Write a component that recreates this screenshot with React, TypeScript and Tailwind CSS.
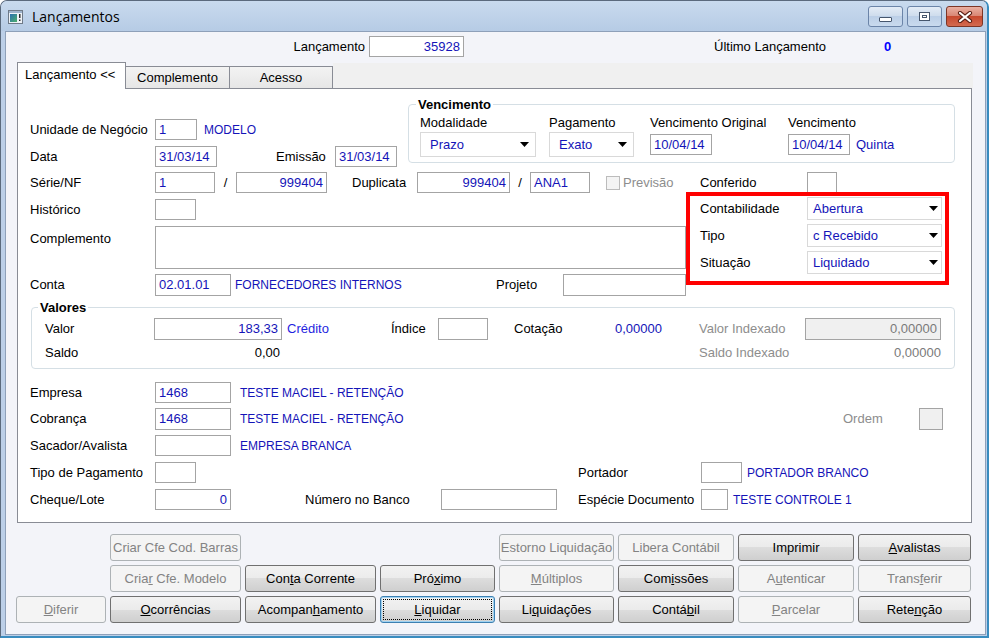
import React from 'react';

type P = { className?: string; children?: React.ReactNode };

// caixa de texto (estilo Win7)
const Box: React.FC<P> = ({ className = '', children }) => (
  <div className={'flex-none border border-[#a4a4a4] px-[3px] whitespace-nowrap overflow-hidden ' + className}>{children}</div>
);

const Arrow = () => (
  <svg width="9" height="5" viewBox="0 0 9 5" className="flex-none">
    <path d="M0 0h9L4.5 5z" fill="#000" />
  </svg>
);

const Select: React.FC<P & { value: string }> = ({ className = '', value }) => (
  <div className={'flex-none flex items-center justify-between bg-white border border-[#d9d9d9] text-[#1414b8] ' + className}>
    <span>{value}</span>
    <Arrow />
  </div>
);

interface BtnProps {
  children: React.ReactNode;
  disabled?: boolean;
  focused?: boolean;
}
const Btn: React.FC<BtnProps> = ({ children, disabled, focused }) => {
  let cls = 'h-[27px] rounded-[3px] border flex items-center justify-center whitespace-nowrap overflow-hidden ';
  if (disabled) cls += 'border-[#adb2b5] bg-[#f4f4f4] text-[#838383]';
  else if (focused)
    cls +=
      'border-[#3c7fb1] bg-[linear-gradient(#f2f2f2,#ebebeb_50%,#dddddd_50%,#cfcfcf)] shadow-[inset_0_0_0_1px_#9fd2f2] text-black outline-1 outline-dotted outline-black -outline-offset-4';
  else cls += 'border-[#707070] bg-[linear-gradient(#f2f2f2,#ebebeb_50%,#dddddd_50%,#cfcfcf)] text-black';
  return (
    <div className={cls}>
      <span>{children}</span>
    </div>
  );
};

const TitleButtons = () => (
  <div className="flex gap-[4px] mr-[4px] mt-[5px] self-start">
    <div className="w-[35px] h-[21px] rounded-[3px] border border-[#6b84a8] bg-[linear-gradient(#e4ecf6,#cddbec_50%,#bccfe7_50%,#c9daee)] flex items-end justify-center pb-[4px]">
      <div className="w-[13px] h-[5px] bg-white border border-[#46566d] rounded-[1px]" />
    </div>
    <div className="w-[35px] h-[21px] rounded-[3px] border border-[#6b84a8] bg-[linear-gradient(#e4ecf6,#cddbec_50%,#bccfe7_50%,#c9daee)] flex items-center justify-center">
      <div className="w-[11px] h-[9px] bg-white border border-[#46566d] flex items-center justify-center">
        <div className="w-[5px] h-[3px] border border-[#46566d]" />
      </div>
    </div>
    <div className="w-[37px] h-[21px] rounded-[3px] border border-[#7d3526] bg-[linear-gradient(#eab0a2,#d88371_50%,#c7492f_50%,#d36a4f)] flex items-center justify-center">
      <svg width="16" height="12" viewBox="0 0 16 12">
        <path d="M3 2l10 8M13 2L3 10" stroke="#5a2016" strokeWidth="4.2" strokeLinecap="round" />
        <path d="M3 2l10 8M13 2L3 10" stroke="#fff" strokeWidth="2.2" strokeLinecap="round" />
      </svg>
    </div>
  </div>
);

const AppIcon = () => (
  <svg width="15" height="14" viewBox="0 0 15 14" className="flex-none">
    <defs>
      <linearGradient id="ig" x1="0" y1="0" x2="1" y2="1">
        <stop offset="0" stopColor="#2a6fb0" />
        <stop offset="1" stopColor="#4caf6a" />
      </linearGradient>
    </defs>
    <rect x="0.5" y="0.5" width="14" height="13" fill="#eef2f7" stroke="#6f7a88" />
    <rect x="1" y="1" width="13" height="2" fill="#9fb3cc" />
    <rect x="2" y="4" width="7" height="8" fill="url(#ig)" />
    <rect x="11" y="4" width="1.5" height="4" fill="#2b2b2b" />
    <rect x="11" y="9.5" width="1.5" height="1.5" fill="#2b2b2b" />
  </svg>
);

const BLUE = 'text-[#1414b8]';
// nomes em maiúsculas: a fonte original tem capitulares mais estreitas
const CAPS = 'text-[12px] text-[#1414b8]';

export default function App() {
  return (
    <div className="w-[989px] h-[638px] overflow-hidden flex flex-col bg-[#bccfe8] border-l border-t border-[#5b6a7d] border-r-2 border-b-2 border-r-[#3a8cbf] border-b-[#3a8cbf] rounded-t-[7px] font-['Liberation_Sans',Arial,sans-serif] text-[13px] text-black">
      {/* barra de título */}
      <div className="h-[30px] flex-none flex items-center bg-[linear-gradient(#c9daee,#b6cbe5)]">
        <div className="ml-[7px] mt-[1px]">
          <AppIcon />
        </div>
        <span className="ml-[9px] text-[14px] font-['Open_Sans',sans-serif] text-black">Lançamentos</span>
        <div className="flex-1" />
        <TitleButtons />
      </div>

      <div className="flex-1 pl-[4px] pr-[1px] pb-[1px] flex flex-col">
        <div className="flex-1 bg-[#f3f4f9] border border-[#8ea0b9] flex flex-col">
          {/* topo */}
          <div className="mt-[4px] h-[21px] flex items-center">
            <div className="w-[363px] text-right pr-[4px]">Lançamento</div>
            <Box className={'w-[95px] h-[21px] leading-[19px] bg-white text-right ' + BLUE}>35928</Box>
            <div className="ml-[250px] w-[170px]">Último Lançamento</div>
            <div className="font-bold text-[#0000ff]">0</div>
          </div>

          {/* abas */}
          <div className="mt-[5px] ml-[11px] w-[956px] h-[26px] flex items-end">
            <div className="relative z-10 -mb-px w-[109px] h-[27px] bg-white border border-b-0 border-[#898c95] pl-[7px] leading-[24px]">
              Lançamento &lt;&lt;
            </div>
            <div className="w-[104px] h-[22px] border border-l-0 border-b-0 border-[#898c95] bg-[linear-gradient(#f3f3f3,#e6e6e6)] text-center leading-[21px]">
              Complemento
            </div>
            <div className="w-[103px] h-[22px] border border-l-0 border-b-0 border-[#898c95] bg-[linear-gradient(#f3f3f3,#e6e6e6)] text-center leading-[21px]">
              Acesso
            </div>
            <div className="flex-1 h-[25px] bg-[#f0f0f0]" />
          </div>

          {/* painel */}
          <div className="ml-[11px] w-[955px] h-[435px] flex-none bg-white border border-[#898c95] pl-[12px] flex flex-col">
            {/* seção A */}
            <div className="flex items-start">
              <div className="w-[378px] pt-[30px] flex-none">
                <div className="h-[21px] flex items-center">
                  <div className="w-[125px] flex-none">Unidade de Negócio</div>
                  <Box className={'w-[42px] h-[21px] leading-[19px] ' + BLUE}>1</Box>
                  <div className={'ml-[7px] ' + CAPS}>MODELO</div>
                </div>
                <div className="mt-[6px] h-[21px] flex items-center">
                  <div className="w-[125px] flex-none">Data</div>
                  <Box className={'w-[62px] h-[21px] leading-[19px] ' + BLUE}>31/03/14</Box>
                  <div className="ml-[59px] w-[59px] flex-none">Emissão</div>
                  <Box className={'w-[62px] h-[21px] leading-[19px] ' + BLUE}>31/03/14</Box>
                </div>
              </div>
              <fieldset className="mt-[8px] w-[547px] flex-none border border-[#d5dfe5] rounded-[4px] px-[11px] pb-[5px]">
                <legend className="-ml-[4px] px-[2px] font-bold leading-[15px]">Vencimento</legend>
                <div className="mt-[3px] h-[16px] flex items-center">
                  <div className="w-[129px] flex-none">Modalidade</div>
                  <div className="w-[101px] flex-none">Pagamento</div>
                  <div className="w-[138px] flex-none">Vencimento Original</div>
                  <div>Vencimento</div>
                </div>
                <div className="mt-[1px] h-[25px] flex items-center">
                  <Select value="Prazo" className="w-[116px] h-[25px] pl-[9px] pr-[6px]" />
                  <Select value="Exato" className="ml-[13px] w-[85px] h-[25px] pl-[9px] pr-[6px]" />
                  <Box className={'ml-[16px] w-[62px] h-[21px] leading-[19px] ' + BLUE}>10/04/14</Box>
                  <Box className={'ml-[76px] w-[62px] h-[21px] leading-[19px] ' + BLUE}>10/04/14</Box>
                  <div className={'ml-[6px] ' + BLUE}>Quinta</div>
                </div>
              </fieldset>
            </div>

            {/* Série/NF */}
            <div className="mt-[5px] h-[21px] flex items-center">
              <div className="w-[125px] flex-none">Série/NF</div>
              <Box className={'w-[60px] h-[21px] leading-[19px] ' + BLUE}>1</Box>
              <div className="w-[21px] flex-none text-center">/</div>
              <Box className={'w-[91px] h-[21px] leading-[19px] text-right ' + BLUE}>999404</Box>
              <div className="ml-[25px] w-[65px] flex-none">Duplicata</div>
              <Box className={'w-[93px] h-[21px] leading-[19px] text-right ' + BLUE}>999404</Box>
              <div className="w-[20px] flex-none text-center">/</div>
              <Box className={'w-[60px] h-[21px] leading-[19px] ' + BLUE}>ANA1</Box>
              <div className="ml-[16px] w-[14px] h-[14px] flex-none border border-[#bcbcbc] bg-[#f4f4f4]" />
              <div className="ml-[3px] w-[77px] flex-none text-[#8d8d8d]">Previsão</div>
              <div className="w-[107px] flex-none">Conferido</div>
              <Box className="w-[30px] h-[21px]" />
            </div>

            {/* seção B */}
            <div className="-mt-px flex items-start">
              <div className="w-[656px] flex-none pt-[7px]">
                <div className="h-[21px] flex items-center">
                  <div className="w-[125px] flex-none">Histórico</div>
                  <Box className="w-[41px] h-[21px]" />
                </div>
                <div className="mt-[6px] flex items-start">
                  <div className="w-[125px] flex-none pt-[3px]">Complemento</div>
                  <Box className="w-[531px] h-[43px]" />
                </div>
                <div className="mt-[5px] h-[22px] flex items-center">
                  <div className="w-[125px] flex-none">Conta</div>
                  <Box className={'w-[76px] h-[22px] leading-[20px] ' + BLUE}>02.01.01</Box>
                  <div className={'w-[265px] flex-none pl-[4px] ' + CAPS}>FORNECEDORES INTERNOS</div>
                  <div className="w-[67px] flex-none">Projeto</div>
                  <Box className="w-[123px] h-[22px]" />
                </div>
              </div>
              <div className="w-[263px] h-[93px] flex-none border-4 border-[#ff0000] pl-[10px] pt-[1px]">
                <div className="h-[23px] flex items-center">
                  <div className="w-[107px] flex-none">Contabilidade</div>
                  <Select value="Abertura" className="w-[135px] h-[23px] pl-[5px] pr-[3px]" />
                </div>
                <div className="mt-[4px] h-[23px] flex items-center">
                  <div className="w-[107px] flex-none">Tipo</div>
                  <Select value="c Recebido" className="w-[135px] h-[23px] pl-[5px] pr-[3px]" />
                </div>
                <div className="mt-[4px] h-[23px] flex items-center">
                  <div className="w-[107px] flex-none">Situação</div>
                  <Select value="Liquidado" className="w-[135px] h-[23px] pl-[5px] pr-[3px]" />
                </div>
              </div>
            </div>

            {/* Valores */}
            <fieldset className="mt-[4px] ml-[1px] w-[924px] border border-[#d5dfe5] rounded-[4px] pl-[13px] pb-[6px]">
              <legend className="-ml-[7px] px-[2px] font-bold leading-[15px]">Valores</legend>
              <div className="mt-[3px] h-[22px] flex items-center">
                <div className="w-[109px] flex-none">Valor</div>
                <Box className={'w-[128px] h-[22px] leading-[20px] text-right ' + BLUE}>183,33</Box>
                <div className="w-[109px] flex-none pl-[5px] text-[#1f1fe0]">Crédito</div>
                <div className="w-[47px] flex-none">Índice</div>
                <Box className="w-[50px] h-[22px]" />
                <div className="ml-[26px] w-[98px] flex-none">Cotação</div>
                <div className={'w-[50px] flex-none text-right ' + BLUE}>0,00000</div>
                <div className="ml-[37px] w-[106px] flex-none text-[#8d8d8d]">Valor Indexado</div>
                <Box className="w-[136px] h-[22px] leading-[20px] bg-[#f0f0f0] text-right text-[#7a7a7a]">0,00000</Box>
              </div>
              <div className="mt-[4px] h-[18px] flex items-center">
                <div className="w-[109px] flex-none">Saldo</div>
                <div className="w-[126px] flex-none text-right">0,00</div>
                <div className="ml-[419px] w-[106px] flex-none text-[#8d8d8d]">Saldo Indexado</div>
                <div className="w-[136px] flex-none text-right text-[#7a7a7a]">0,00000</div>
              </div>
            </fieldset>

            {/* demais campos */}
            <div className="mt-[13px] h-[21px] flex items-center">
              <div className="w-[125px] flex-none">Empresa</div>
              <Box className={'w-[76px] h-[21px] leading-[19px] ' + BLUE}>1468</Box>
              <div className={'ml-[9px] ' + CAPS}>TESTE MACIEL - RETENÇÃO</div>
            </div>
            <div className="mt-[5px] h-[22px] flex items-center">
              <div className="w-[125px] flex-none">Cobrança</div>
              <Box className={'w-[76px] h-[22px] leading-[20px] ' + BLUE}>1468</Box>
              <div className={'w-[612px] flex-none pl-[9px] ' + CAPS}>TESTE MACIEL - RETENÇÃO</div>
              <div className="w-[76px] flex-none text-[#8d8d8d]">Ordem</div>
              <Box className="w-[24px] h-[22px] bg-[#f0f0f0]" />
            </div>
            <div className="mt-[5px] h-[21px] flex items-center">
              <div className="w-[125px] flex-none">Sacador/Avalista</div>
              <Box className="w-[76px] h-[21px]" />
              <div className={'ml-[9px] ' + CAPS}>EMPRESA BRANCA</div>
            </div>
            <div className="mt-[6px] h-[21px] flex items-center">
              <div className="w-[125px] flex-none">Tipo de Pagamento</div>
              <Box className="w-[41px] h-[21px]" />
              <div className="ml-[382px] w-[123px] flex-none">Portador</div>
              <Box className="w-[41px] h-[21px]" />
              <div className={'ml-[5px] ' + CAPS}>PORTADOR BRANCO</div>
            </div>
            <div className="mt-[6px] h-[21px] flex items-center">
              <div className="w-[125px] flex-none">Cheque/Lote</div>
              <Box className={'w-[76px] h-[21px] leading-[19px] text-right ' + BLUE}>0</Box>
              <div className="ml-[74px] w-[136px] flex-none">Número no Banco</div>
              <Box className="w-[116px] h-[21px]" />
              <div className="ml-[21px] w-[123px] flex-none">Espécie Documento</div>
              <Box className="w-[27px] h-[21px]" />
              <div className={'ml-[5px] ' + CAPS}>TESTE CONTROLE 1</div>
            </div>
          </div>

          {/* botões */}
          <div className="mt-[11px] ml-[10px] grid grid-cols-[90px_131px_131px_115px_115px_116px_116px_113px] gap-x-[4px] gap-y-[4px]">
            <div />
            <Btn disabled>Criar Cfe Cod. Barras</Btn>
            <div />
            <div />
            <Btn disabled>Estorno Liquidação</Btn>
            <Btn disabled>Libera Contábil</Btn>
            <Btn>Imprimir</Btn>
            <Btn><u>A</u>valistas</Btn>

            <div />
            <Btn disabled>Cria<u>r</u> Cfe. Modelo</Btn>
            <Btn>Con<u>t</u>a Corrente</Btn>
            <Btn>Pró<u>x</u>imo</Btn>
            <Btn disabled><u>M</u>últiplos</Btn>
            <Btn>Com<u>i</u>ssões</Btn>
            <Btn disabled>A<u>u</u>tenticar</Btn>
            <Btn disabled>Trans<u>f</u>erir</Btn>

            <Btn disabled><u>D</u>iferir</Btn>
            <Btn><u>O</u>corrências</Btn>
            <Btn>Acompan<u>h</u>amento</Btn>
            <Btn focused><u>L</u>iquidar</Btn>
            <Btn>Li<u>q</u>uidações</Btn>
            <Btn>Contá<u>b</u>il</Btn>
            <Btn disabled><u>P</u>arcelar</Btn>
            <Btn>Rete<u>n</u>ção</Btn>
          </div>
        </div>
      </div>
    </div>
  );
}
